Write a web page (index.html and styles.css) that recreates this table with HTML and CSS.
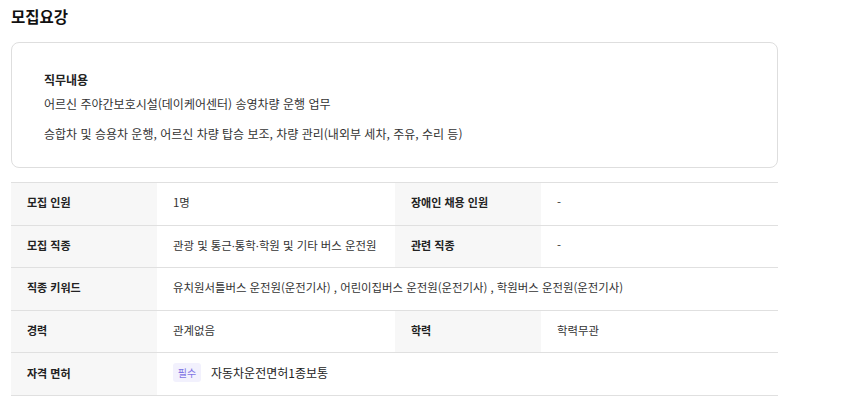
FILE: index.html
```html
<!DOCTYPE html>
<html lang="ko">
<head>
<meta charset="utf-8">
<link rel="stylesheet" href="styles.css">
</head>
<body>
<section class="recruit">
  <h2 class="title">모집요강</h2>
  <div class="card">
    <h3 class="card-head">직무내용</h3>
    <p class="card-line">어르신 주야간보호시설(데이케어센터) 송영차량 운행 업무</p>
    <p class="card-line gap">승합차 및 승용차 운행, 어르신 차량 탑승 보조, 차량 관리(내외부 세차, 주유, 수리 등)</p>
  </div>
  <div class="table">
    <div class="row">
      <div class="th">모집 인원</div>
      <div class="td">1명</div>
      <div class="th">장애인 채용 인원</div>
      <div class="td">-</div>
    </div>
    <div class="row">
      <div class="th">모집 직종</div>
      <div class="td"><span>관광 및 통근<span class="dot">·</span>통학<span class="dot">·</span>학원 및 기타 버스 운전원</span></div>
      <div class="th">관련 직종</div>
      <div class="td">-</div>
    </div>
    <div class="row">
      <div class="th">직종 키워드</div>
      <div class="td wide">유치원서틀버스 운전원(운전기사) , 어린이집버스 운전원(운전기사) , 학원버스 운전원(운전기사)</div>
    </div>
    <div class="row">
      <div class="th">경력</div>
      <div class="td">관계없음</div>
      <div class="th">학력</div>
      <div class="td">학력무관</div>
    </div>
    <div class="row">
      <div class="th">자격 면허</div>
      <div class="td wide"><span class="badge">필수</span><span class="license">자동차운전면허1종보통</span></div>
    </div>
  </div>
</section>
</body>
</html>
```
FILE: styles.css
```css
* { box-sizing: border-box; }
html, body { margin: 0; padding: 0; background: #fff; }
body {
  font-family: "Noto Sans CJK KR", "Noto Sans", sans-serif;
  color: #333;
}
.recruit {
  width: 778px;
  padding: 5px 0 0 11px;
}
.title {
  margin: 0;
  font-size: 15.5px;
  font-weight: 700;
  line-height: 22px;
  color: #111;
}
.card {
  margin-top: 15px;
  border: 1px solid #dedede;
  border-radius: 8px;
  padding: 27px 32px 23px;
  height: 126px;
}
.card-head {
  margin: 0;
  font-size: 12px;
  font-weight: 700;
  line-height: 20px;
  color: #222;
}
.card-line {
  margin: 4px 0 0;
  font-size: 12px;
  line-height: 20px;
  color: #333;
}
.card-line.gap { margin-top: 10px; }
.table {
  margin-top: 14px;
  border-top: 1px solid #e0e0e0;
}
.row {
  display: grid;
  grid-template-columns: 146px 238px 146px 1fr;
  border-bottom: 1px solid #e0e0e0;
  height: 42.6px;
}
.th, .td {
  display: flex;
  align-items: center;
  padding: 0 16px 3px;
  white-space: nowrap;
}
.th {
  background: #f7f7f7;
  font-weight: 700;
  font-size: 11px;
  color: #222;
}
.td { color: #333; font-size: 11.4px; }
.td.wide { grid-column: 2 / 5; }
.dot { font-family: "Noto Sans", "DejaVu Sans", sans-serif; }
.badge {
  display: inline-flex;
  align-items: center;
  justify-content: center;
  width: 28px;
  height: 19px;
  border-radius: 3px;
  background: #f2f1fd;
  color: #7f74e4;
  font-size: 10px;
  margin-right: 10px;
}
.license { font-size: 12px; color: #222; }
```
